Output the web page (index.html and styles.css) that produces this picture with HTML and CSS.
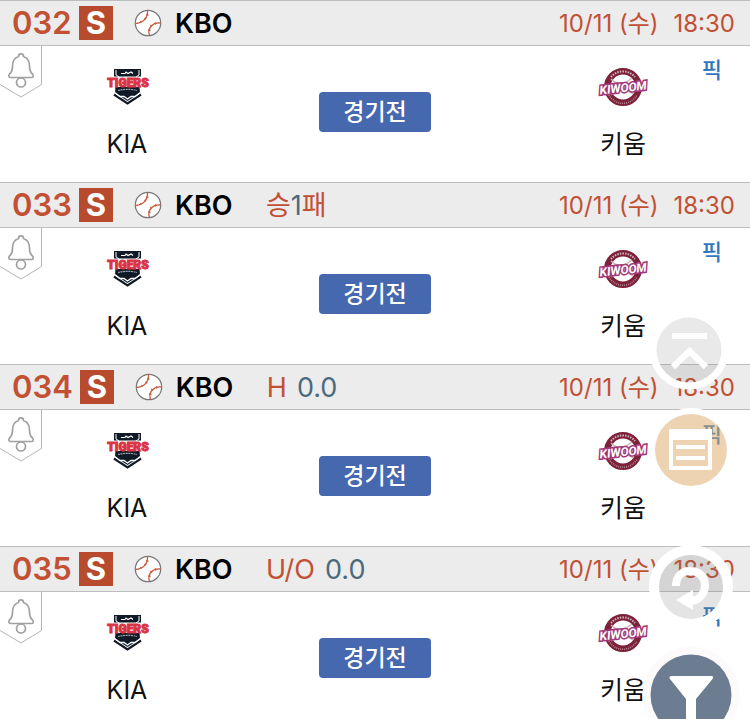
FILE: index.html
```html
<!DOCTYPE html>
<html lang="ko">
<head>
<meta charset="utf-8">
<meta name="viewport" content="width=device-width, initial-scale=1">
<title>KBO 경기 목록</title>
<link rel="stylesheet" href="styles.css">
</head>
<body>
<svg class="sprite" aria-hidden="true">
  <symbol id="ball" viewBox="0 0 28 28">
    <circle cx="14" cy="14" r="12.7" fill="#fff" stroke="#777" stroke-width="1.2"/>
    <g fill="none" stroke="#c75b3f">
      <path d="M13.500 1.500C14 9 9 14 1.500 14.500M15.500 26.500C13 19 19 13 26.500 14" stroke-width="1.300"/>
      <path d="M12.200 5.500l2.300 .8M10.500 9l1.600 1.300M6.500 12l.8 1.800M16.500 21.500l-2.300-.5M18 17.500l-1.600-1.500M21.800 15.500l-.6-2" stroke-width="1.300"/>
    </g>
  </symbol>
  <symbol id="bell" viewBox="0 0 43 53">
    <path d="M0 0H41.500V38L21 51L0 38.500Z" fill="#fff"/>
    <path d="M41.500 0V38.500L21 51L0 38.500" fill="none" stroke="#b5b5b5"/>
    <g fill="none" stroke="#a0a0a0" stroke-width="1.700" stroke-linejoin="round">
      <path d="M18.500 10.500C18.500 7 23.500 7 23.500 10.500C28 12 29.500 15 29.500 20C29.500 25 30.500 26.500 32.500 28C33.500 29 33.500 31.500 32 31.500H10.500C8.500 31.500 8.500 29 9.500 28C11.500 26.500 12.500 25 12.500 20C12.500 15 14 12 18.500 10.500Z"/>
      <circle cx="21" cy="36.500" r="4.500"/>
    </g>
  </symbol>
  <symbol id="tigers" viewBox="0 0 54 42">
    <path d="M14 3H41V12H39L40 27L27.500 35L15 27L16 12H14Z" fill="#0f1a26"/>
    <path d="M16 4V9L19 11M39 4V9L36 11" fill="none" stroke="#fff" stroke-width="1"/>
    <path d="M21 7.500H25L26 6L28 7.500L31 6L33 7.500" fill="none" stroke="#fff" stroke-width="1.200"/>
    <path d="M18 24.500C23 23 32 23 37 24.500" fill="none" stroke="#9aa3ab" stroke-width="1.200" stroke-dasharray="2 .600"/>
    <path d="M14 28.500L27.500 37.500L41 28.500" fill="none" stroke="#0f1a26" stroke-width="2.200"/>
    <path d="M14 26L20 30.500H24L27.500 33L31 30.500H35L41 26" fill="none" stroke="#fff" stroke-width="1.300"/>
    <path d="M8 10.500H48L46 21H10Z" fill="#fff"/>
    <text x="28" y="20.500" text-anchor="middle" class="tigers-word">TIGERS</text>
  </symbol>
  <symbol id="kiwoom" viewBox="0 0 54 42">
    <circle cx="27" cy="21" r="15.700" fill="#fff" stroke="#7c2239" stroke-width="6.500"/>
    <path d="M15 13C22 20 30 17 36 12M15 29C20 22 31 23 37 28" fill="none" stroke="#cdb6bb" stroke-width="1.500"/>
    <path d="M15 11A15.700 15.700 0 0 1 39 11" fill="none" stroke="#d3b3bd" stroke-width="2" stroke-dasharray="1.500 1.100"/>
    <path d="M13 29A16 16 0 0 0 41 29" fill="none" stroke="#b98897" stroke-width="1.500" stroke-dasharray="1 1"/>
    <text x="27" y="26" text-anchor="middle" transform="rotate(-6 27 21)" class="kiwoom-word">KIWOOM</text>
  </symbol>
</svg>

<main class="games">
  <article class="game">
    <header class="bar">
      <span class="num">032</span><span class="badge">S</span>
      <svg class="ball" aria-hidden="true"><use href="#ball"/></svg>
      <h2 class="league">KBO</h2>
      <time class="when"><span>10/11 (수)</span><span>18:30</span></time>
    </header>
    <div class="match">
      <button class="alarm" aria-label="알림"><svg><use href="#bell"/></svg></button>
      <div class="team"><svg class="logo"><use href="#tigers"/></svg><span>KIA</span></div>
      <button class="status">경기전</button>
      <div class="team"><svg class="logo"><use href="#kiwoom"/></svg><span>키움</span></div>
      <a class="pick" href="#pick">픽</a>
    </div>
  </article>
  <article class="game">
    <header class="bar">
      <span class="num">033</span><span class="badge">S</span>
      <svg class="ball" aria-hidden="true"><use href="#ball"/></svg>
      <h2 class="league">KBO</h2>
      <span class="option">승<span class="value">1</span>패</span>
      <time class="when"><span>10/11 (수)</span><span>18:30</span></time>
    </header>
    <div class="match">
      <button class="alarm" aria-label="알림"><svg><use href="#bell"/></svg></button>
      <div class="team"><svg class="logo"><use href="#tigers"/></svg><span>KIA</span></div>
      <button class="status">경기전</button>
      <div class="team"><svg class="logo"><use href="#kiwoom"/></svg><span>키움</span></div>
      <a class="pick" href="#pick">픽</a>
    </div>
  </article>
  <article class="game">
    <header class="bar">
      <span class="num">034</span><span class="badge">S</span>
      <svg class="ball" aria-hidden="true"><use href="#ball"/></svg>
      <h2 class="league">KBO</h2>
      <span class="option pair"><span>H</span><span class="value">0.0</span></span>
      <time class="when"><span>10/11 (수)</span><span>18:30</span></time>
    </header>
    <div class="match">
      <button class="alarm" aria-label="알림"><svg><use href="#bell"/></svg></button>
      <div class="team"><svg class="logo"><use href="#tigers"/></svg><span>KIA</span></div>
      <button class="status">경기전</button>
      <div class="team"><svg class="logo"><use href="#kiwoom"/></svg><span>키움</span></div>
      <a class="pick" href="#pick">픽</a>
    </div>
  </article>
  <article class="game">
    <header class="bar">
      <span class="num">035</span><span class="badge">S</span>
      <svg class="ball" aria-hidden="true"><use href="#ball"/></svg>
      <h2 class="league">KBO</h2>
      <span class="option pair"><span>U/O</span><span class="value">0.0</span></span>
      <time class="when"><span>10/11 (수)</span><span>18:30</span></time>
    </header>
    <div class="match">
      <button class="alarm" aria-label="알림"><svg><use href="#bell"/></svg></button>
      <div class="team"><svg class="logo"><use href="#tigers"/></svg><span>KIA</span></div>
      <button class="status">경기전</button>
      <div class="team"><svg class="logo"><use href="#kiwoom"/></svg><span>키움</span></div>
      <a class="pick" href="#pick">픽</a>
    </div>
  </article>
</main>

<nav class="floating">
  <div class="group">
    <button class="fab" aria-label="맨 위로">
      <svg width="80" height="80" viewBox="0 0 80 80">
        <circle cx="38" cy="39" r="36" fill="none" stroke="#fff" stroke-width="7"/>
        <circle cx="38" cy="39" r="32.500" fill="#787878" fill-opacity=".16"/>
        <path d="M21 25H56M22 56L38.500 40L55 56" fill="none" stroke="#fff" stroke-width="6"/>
      </svg>
    </button>
    <button class="fab" aria-label="목록">
      <svg width="84" height="84" viewBox="0 0 84 84">
        <circle cx="42" cy="42" r="39" fill="none" stroke="#fff" stroke-width="6"/>
        <circle cx="42" cy="42" r="36" fill="#dba763" fill-opacity=".5"/>
        <path fill-rule="evenodd" fill="#fff" d="M20 21H63V62H20ZM24 32V58H59V32ZM27 37H56V41H27ZM27 48H56V52H27Z"/>
      </svg>
    </button>
  </div>
  <div class="group">
    <button class="fab" aria-label="새로고침">
      <svg width="84" height="84" viewBox="0 0 84 84">
        <circle cx="42" cy="42" r="37" fill="none" stroke="#fff" stroke-width="10"/>
        <circle cx="42" cy="42" r="32" fill="#787878" fill-opacity=".2"/>
        <path d="M27 41C27 30 34 26 41 26C50 26 56 32 56 40C56 49 50 55 43 56" fill="none" stroke="#fff" stroke-width="8"/>
        <path d="M27 55L44 45V65Z" fill="#fff"/>
      </svg>
    </button>
    <button class="fab" aria-label="필터">
      <svg width="98" height="98" viewBox="0 0 98 98">
        <circle cx="49" cy="49" r="48.500" fill="#fdfafb"/>
        <circle cx="49" cy="49" r="40.500" fill="#6c7c91"/>
        <path d="M29 30H70Q72 31 70.500 33L54 53V76H44V53L28 33Q26.500 31 29 30Z" fill="#fff"/>
      </svg>
    </button>
  </div>
</nav>
</body>
</html>
```
FILE: styles.css
```css
* {
  box-sizing: border-box;
}

body {
  margin: 0;
  background: #fff;
  color: #111;
  font-family: Inter, "Noto Sans CJK KR", sans-serif;
}

button {
  padding: 0;
  border: 0;
  background: none;
  font: inherit;
  cursor: pointer;
}

svg {
  display: block;
}

.sprite {
  display: none;
}

.games {
  height: 100vh;
  overflow-y: auto;
  scrollbar-width: none;
}

.bar {
  display: flex;
  align-items: center;
  height: 46px;
  padding: 0 15px 0 12px;
  border-top: 1px solid #bdbdbd;
  border-bottom: 1px solid #bdbdbd;
  background: #ececec;
  color: #c25033;
  white-space: nowrap;
}

.num {
  min-width: 60px;
  font-size: 31px;
  font-weight: 600;
  line-height: 34px;
}

.badge {
  width: 34px;
  margin-left: 7px;
  background: #b84b2e;
  color: #fff;
  font-size: 31px;
  font-weight: 700;
  line-height: 34px;
  text-align: center;
}

.ball {
  width: 28px;
  height: 28px;
  margin-left: 21px;
}

.league {
  min-width: 60px;
  margin: 0 0 0 13px;
  color: #000;
  font-size: 27px;
  font-weight: 600;
}

.option {
  margin-left: 31px;
  padding-top: 2px;
  font-size: 27px;
  line-height: 34px;
}

.pair {
  display: flex;
  gap: 10px;
}

.value {
  color: #4b6a7c;
}

.when {
  display: flex;
  gap: 15px;
  margin-left: auto;
  padding-top: 2px;
  font-size: 24px;
  line-height: 32px;
}

.match {
  position: relative;
  display: grid;
  grid-template-columns: repeat(3, 1fr);
  justify-items: center;
  align-items: start;
  height: 136px;
  padding: 20px 3px 0;
}

.alarm {
  position: absolute;
  top: 0;
  left: 0;
}

.alarm svg {
  width: 43px;
  height: 53px;
}

.team {
  display: flex;
  flex-direction: column;
  align-items: center;
  gap: 19px;
  font-size: 25px;
  line-height: 34px;
}

.logo {
  width: 54px;
  height: 42px;
}

.status {
  width: 112px;
  height: 40px;
  margin-top: 26px;
  border-radius: 4px;
  background: #4668ae;
  color: #fff;
  font-size: 23px;
  font-weight: 500;
  line-height: 40px;
}

.pick {
  position: absolute;
  top: 8px;
  right: 28px;
  color: #2f78c0;
  font-size: 22px;
  font-weight: 500;
  line-height: 32px;
  text-decoration: none;
}

.tigers-word {
  fill: #d93344;
  stroke: #d93344;
  stroke-width: 1px;
  font: 900 12px Roboto, sans-serif;
}

.kiwoom-word {
  fill: #fff;
  stroke: #a3387a;
  stroke-width: 3px;
  paint-order: stroke;
  font: italic 700 12px Roboto, sans-serif;
}

.floating {
  position: fixed;
  right: 10px;
  bottom: -25px;
  display: flex;
  flex-direction: column;
  gap: 53px;
}

.group {
  display: flex;
  flex-direction: column;
  align-items: center;
  gap: 17px;
}
```
